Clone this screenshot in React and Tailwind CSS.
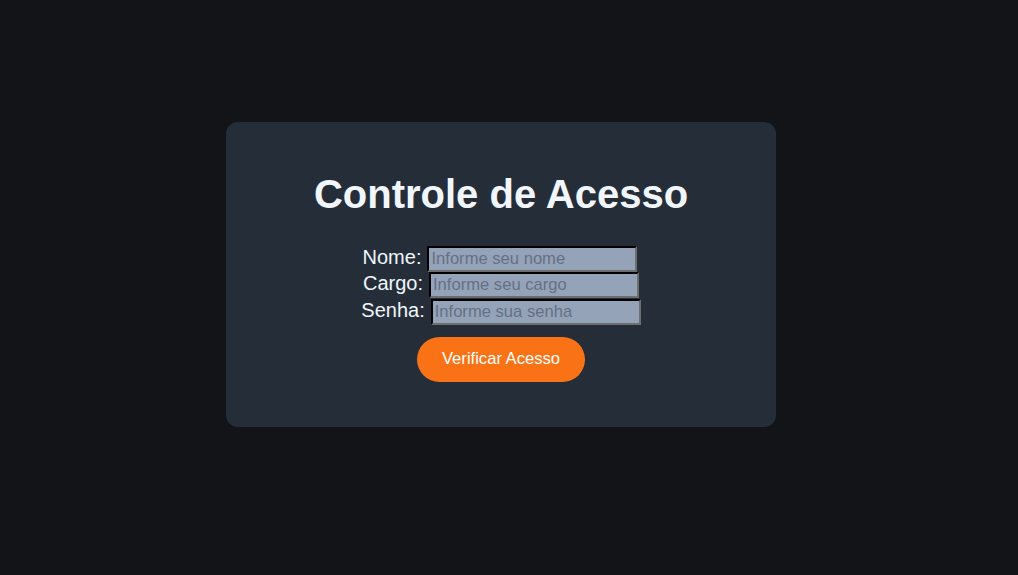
export default function App() {
  const inputCls =
    "w-[210px] h-[26px] bg-[#94a3b8] border-2 [border-style:inset] border-t-[#111] border-l-[#111] border-b-[#6e6e6e] border-r-[#6e6e6e] px-[2px] text-[16.6px] text-[#1f2937] placeholder:text-[#667085] outline-none";
  return (
    <div className="min-h-[575px] w-full bg-[#121418] font-['Liberation_Sans',Arial,sans-serif]">
      <div className="w-[1002px] flex justify-center pt-[122px]">
        <div className="w-[550px] h-[305px] bg-[#252e38] rounded-[12px] flex flex-col items-center pt-[49px]">
          <h1 className="text-[40px] leading-[46px] font-bold text-[#f0f6fc]">Controle de Acesso</h1>
          <div className="mt-[29px] flex flex-col items-center text-[20px] text-[#f0f6fc]">
            <div className="h-[26px] flex items-center gap-[6px] -translate-x-[1px]">
              <span className="-translate-y-[2px]">Nome:</span>
              <input className={inputCls} placeholder="Informe seu nome" />
            </div>
            <div className="h-[26.5px] flex items-center gap-[6px]">
              <span className="-translate-y-[2px]">Cargo:</span>
              <input className={inputCls} placeholder="Informe seu cargo" />
            </div>
            <div className="h-[26.5px] flex items-center gap-[6px]">
              <span className="-translate-y-[2px]">Senha:</span>
              <input className={inputCls} placeholder="Informe sua senha" />
            </div>
          </div>
          <button className="mt-[12px] w-[168px] h-[45px] rounded-full bg-[#f97316] text-white text-[16.6px]">
            Verificar Acesso
          </button>
        </div>
      </div>
    </div>
  );
}
